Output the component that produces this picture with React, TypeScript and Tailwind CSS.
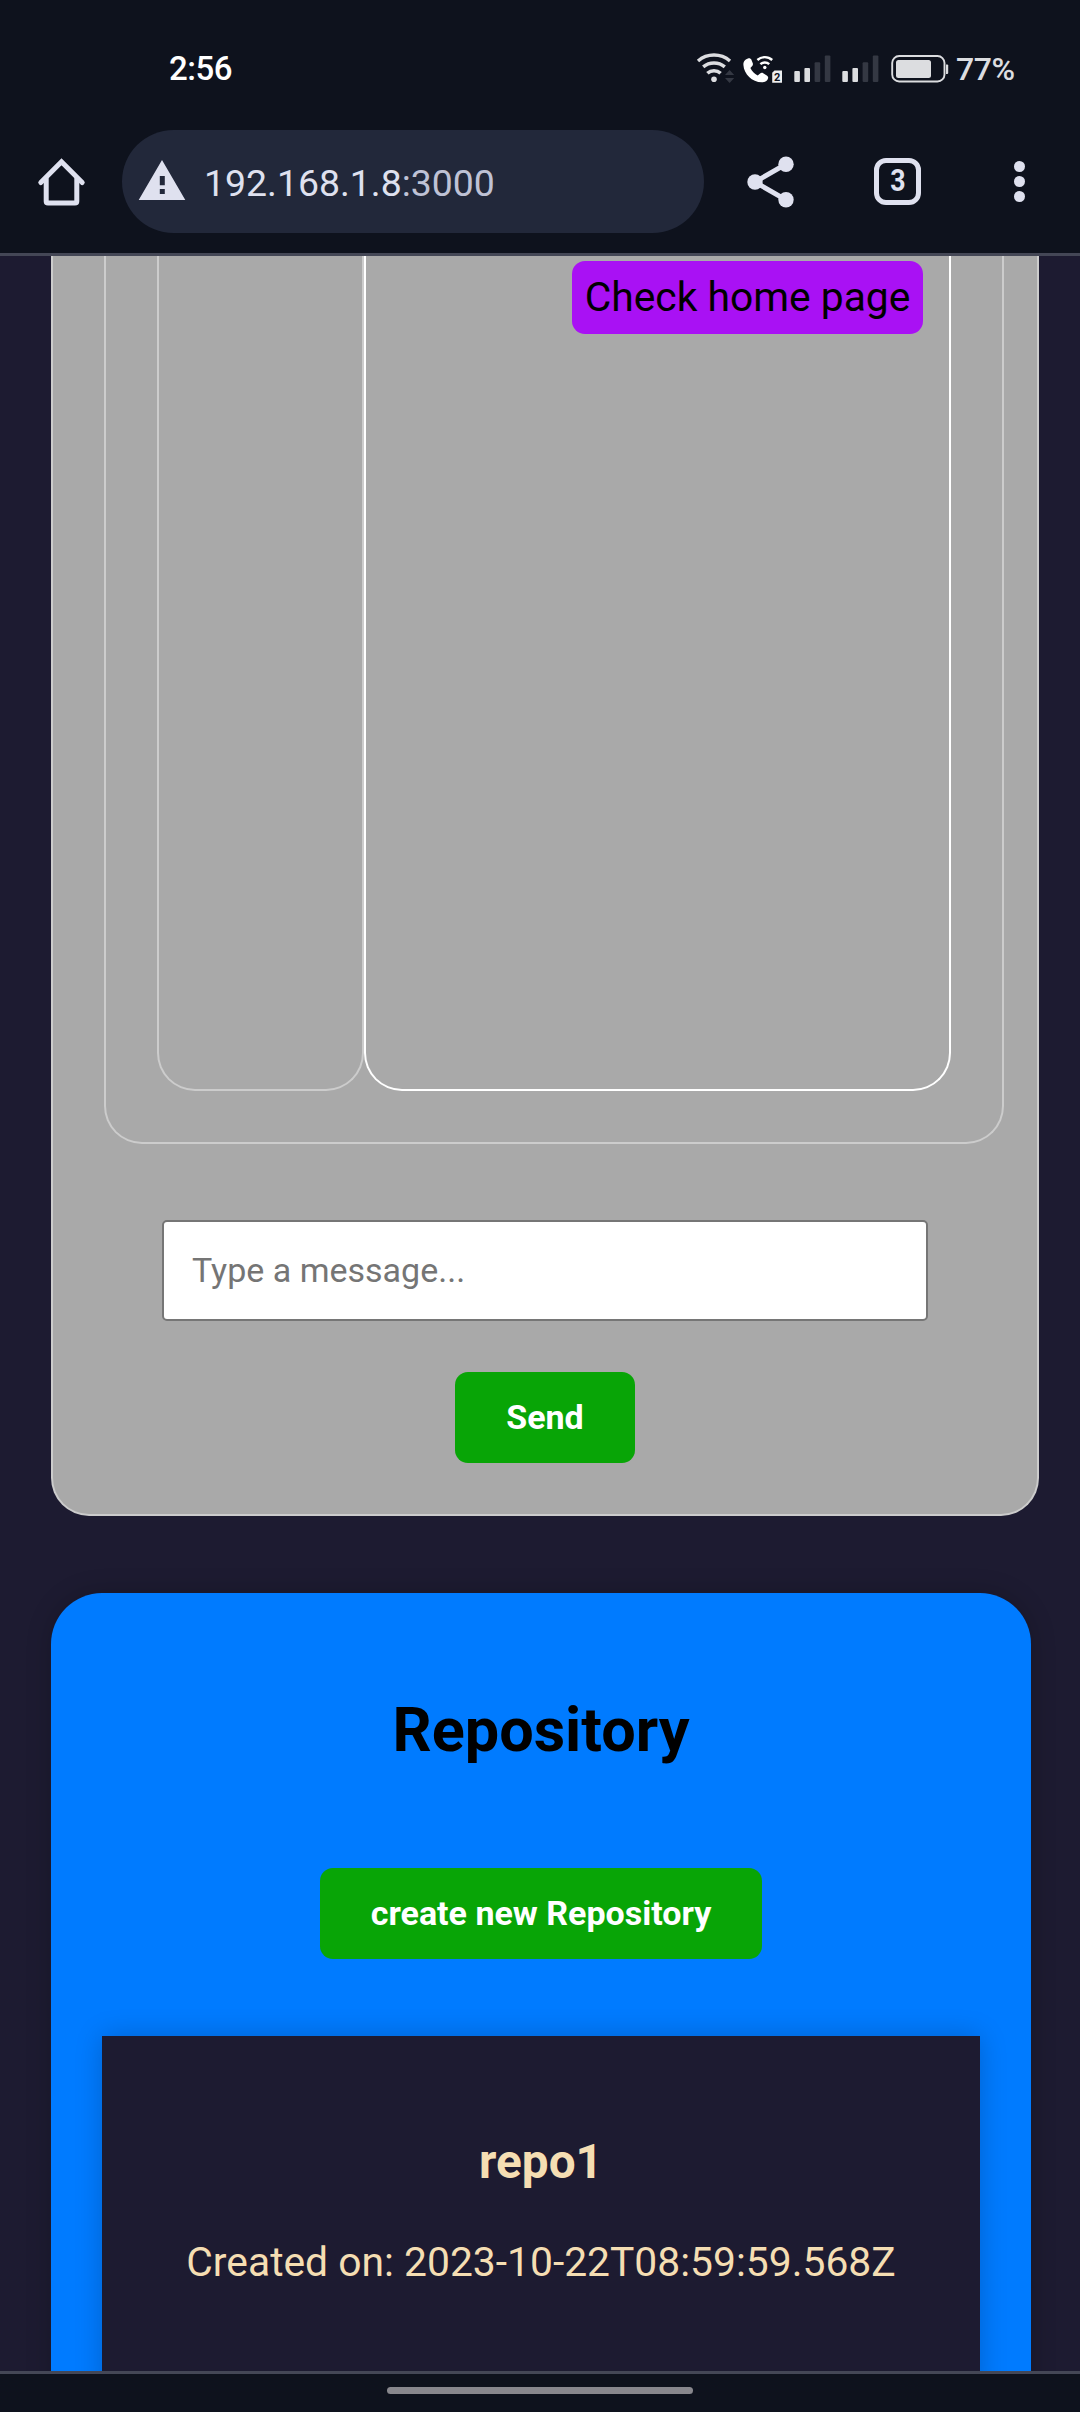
import React from "react";

function StatusBar() {
  return (
    <div className="flex h-[130px] items-start">
      <div className="ml-[169px] mt-[49px] h-10 w-[520px] text-[33px] font-medium leading-10 tracking-[-0.5px] text-white">2:56</div>
      <div className="mt-[50px] flex h-9 items-start text-[#dcdde0]">
        <svg className="ml-[5px] h-9 w-[44px]" viewBox="694 50 44 36" fill="none" stroke="currentColor" strokeWidth="3.5">
          <path d="M698 61a24.700 24.700 0 0 1 32 0" />
          <path d="M703.200 66.900a17 17 0 0 1 21.600 0" />
          <path d="M707.400 73.300a9.600 9.600 0 0 1 13.200 0" />
          <circle cx="714" cy="79.300" r="2.800" fill="currentColor" stroke="none" />
          <path d="M725 75l4.600-5 4.600 5zM725 78h9.200l-4.600 5z" fill="#343843" stroke="none" />
        </svg>
        <svg className="h-9 w-[52px]" viewBox="738 50 52 36" fill="none">
          <path
            d="M748.2 58.6c-2.8.5-5 3-4.8 6.400.6 9.300 8.600 17.200 18.400 17.300 3.200 0 5.700-1.500 6.300-4 .3-1.200-.3-2.200-1.300-2.900l-3.600-2.200c-1.100-.6-2.200-.5-3.100.3l-2.400 2.100c-3.400-1.700-5.800-4.200-7.300-7.500l1.800-2c.7-.8.9-1.800.6-2.800l-1.400-3.600c-.5-1.100-1.700-1.700-3.200-1.400z"
            fill="#fff"
          />
          <path d="M757.400 60a11 11 0 0 1 14.800 0M760.400 64.200a6.400 6.400 0 0 1 8.800 0" stroke="#fff" strokeWidth="2.400" />
          <circle cx="764.800" cy="67.500" r="1.700" fill="#fff" />
          <path d="M774.500 70.500h7.500v12.300h-9.800V72.800z" fill="#eeeeef" />
          <text x="777.100" y="80.700" textAnchor="middle" fontFamily="Roboto, sans-serif" fontSize="11" fontWeight="700" fill="#0e121d">2</text>
        </svg>
        <Signal />
        <Signal />
        <svg className="ml-0.5 h-9 w-[64px]" viewBox="888 50 64 36" fill="none">
          <rect x="892.200" y="56" width="52.300" height="25.500" rx="7" stroke="currentColor" strokeWidth="1.900" />
          <rect x="896" y="60" width="35" height="18" rx="2.500" fill="currentColor" />
          <path d="M946 64.500h1.200q1 0 1 1v7.500q0 1-1 1H946z" fill="currentColor" />
        </svg>
        <div className="-mt-px ml-1 text-[32px] font-medium leading-10 tracking-[-0.400px]">77%</div>
      </div>
    </div>
  );
}

function Signal() {
  return (
    <svg className="h-9 w-[48px]" viewBox="790 50 48 36">
      <rect x="794.300" y="71" width="5.600" height="11" rx="1" fill="currentColor" />
      <rect x="804.400" y="68" width="5.600" height="14" rx="1" fill="currentColor" />
      <rect x="814.600" y="62.300" width="5.600" height="19.700" rx="1" fill="#343843" />
      <rect x="824.800" y="55.500" width="5.600" height="26.500" rx="1" fill="#343843" />
    </svg>
  );
}

function BrowserBar() {
  return (
    <div className="flex h-[103px] items-center text-[#dfe1ef]">
      <svg className="ml-9 h-[52px] w-[52px]" viewBox="36 155 52 52" fill="none" stroke="currentColor" strokeWidth="5" strokeLinejoin="round" strokeLinecap="round">
        <path d="M40.800 181.500L61.500 160.800 82.200 181.500" strokeLinejoin="miter" />
        <path d="M46.200 178v22.200q0 1.800 1.800 1.800h27q1.800 0 1.800-1.800V178" />
      </svg>
      <div className="ml-[34px] flex h-[103px] w-[582px] items-center rounded-full bg-[#22283a]">
        <svg className="ml-3.5 h-[44px] w-[52px]" viewBox="136 159 52 44">
          <path fillRule="evenodd" d="M162 159l23.300 40h-46.600zM159.800 175v9.200h5V175zM159.800 188v5h5v-5z" fill="currentColor" />
        </svg>
        <div className="ml-[16px] mt-[3px] text-[37.400px] leading-[44px]">
          192.168.1.8<span className="text-[#bfc2d5]">:3000</span>
        </div>
      </div>
      <svg className="ml-10 h-[56px] w-[54px]" viewBox="744 153.500 54 56" fill="currentColor">
        <path d="M786 163.700L755 181.500l31 17.800" fill="none" stroke="currentColor" strokeWidth="5" />
        <circle cx="786" cy="163.700" r="7.700" />
        <circle cx="755" cy="181.500" r="7.700" />
        <circle cx="786" cy="199.300" r="7.700" />
      </svg>
      <div className="ml-[76px] flex h-[47px] w-[47px] items-center justify-center rounded-[12px] border-[5px] border-[#dfe1ef] text-[31px] font-bold leading-none">
        <span className="-mt-[3px] scale-x-[0.860]">3</span>
      </div>
      <div className="ml-[93px] flex flex-col gap-[4.700px]">
        <span className="size-[10.600px] rounded-full bg-[#dfe1ef]" />
        <span className="size-[10.600px] rounded-full bg-[#dfe1ef]" />
        <span className="size-[10.600px] rounded-full bg-[#dfe1ef]" />
      </div>
    </div>
  );
}

function ChatCard() {
  return (
    <section className="ml-[51px] flex h-[1260px] w-[988px] flex-col items-center rounded-b-[38px] border-2 border-t-0 border-[#ccc] bg-[#a9a9a9]">
      <div className="ml-[51px] flex h-[888px] w-[900px] self-start rounded-b-[38px] border-2 border-t-0 border-[#ccc] pl-[51px]">
        <div className="h-[835px] w-[207px] rounded-b-[38px] border-2 border-t-0 border-[#ccc]" />
        <div className="flex h-[835px] w-[587px] items-start justify-end rounded-b-[38px] border-2 border-t-0 border-white pr-[26px] pt-[5px]">
          <div className="flex h-[73px] w-[351px] items-center justify-center rounded-[13px] bg-[#a911f4] pb-0.5 text-[40.800px] leading-[48px] text-black">
            Check home page
          </div>
        </div>
      </div>
      <input
        className="mt-[76px] h-[101px] w-[766px] rounded-[5px] border-2 border-[#767676] bg-white px-[28px] pb-0.5 text-[34px] placeholder:text-[#757575]"
        placeholder="Type a message..."
      />
      <button className="mt-[51px] h-[91px] w-[180px] rounded-[13px] bg-[#08a506] text-[34px] font-bold text-white">Send</button>
    </section>
  );
}

function RepositoryCard() {
  return (
    <section className="ml-[51px] mt-[77px] flex h-[900px] w-[980px] shrink-0 flex-col items-center rounded-[51px] bg-[#007bff] pt-[101px] shadow-[0_0_26px_rgba(0,0,0,0.2)]">
      <h1 className="text-[61.200px] font-bold leading-[72px] text-black">Repository</h1>
      <button className="mt-[102px] h-[91px] w-[442px] rounded-[13px] bg-[#08a506] text-[34px] font-bold text-white">
        create new Repository
      </button>
      <div className="mt-[77px] flex h-[360px] w-[878px] flex-col items-center bg-[#1d1b31] pt-[98px] text-[#f5deb3] shadow-[0_0_26px_rgba(0,0,0,0.2)]">
        <h3 className="text-[47.700px] font-bold leading-[56px]">repo1</h3>
        <p className="mt-[48px] text-[40.800px] leading-[48px]">Created on: 2023-10-22T08:59:59.568Z</p>
      </div>
    </section>
  );
}

export default function App() {
  return (
    <div className="flex h-[2412px] w-[1080px] flex-col overflow-hidden bg-[#0e121d] font-[Roboto,sans-serif]">
      <header className="h-[256px] shrink-0 border-b-[3px] border-[#444756]">
        <StatusBar />
        <BrowserBar />
      </header>
      <main className="h-[2115px] shrink-0 overflow-hidden bg-[#1d1b31]">
        <ChatCard />
        <RepositoryCard />
      </main>
      <footer className="flex h-[41px] shrink-0 justify-center border-t-[3px] border-[#444756] pt-[13px]">
        <div className="h-[7px] w-[306px] rounded-full bg-[#88878d]" />
      </footer>
    </div>
  );
}
